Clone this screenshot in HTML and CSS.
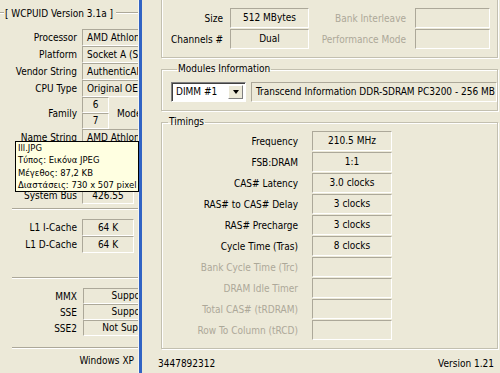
FILE: index.html
```html
<!DOCTYPE html>
<html>
<head>
    <title>WCPUID and memory timings</title>
    <meta charset="utf-8">
    <link rel="stylesheet" href="styles.css">
</head>
<body>
<div class="desktop">
    <!-- WCPUID window -->
    <div class="cpu-win">
        <div class="cpu-head">
            <span class="etch short"></span>
            <span class="cpu-title">[ WCPUID Version 3.1a ]</span>
            <span class="etch"></span>
        </div>
        <div class="cpu-rows">
            <div class="cpu-row"><span class="lbl">Processor</span><span class="val">AMD Athlon(tm) XP</span></div>
            <div class="cpu-row"><span class="lbl">Platform</span><span class="val">Socket A (Slot A)</span></div>
            <div class="cpu-row"><span class="lbl">Vendor String</span><span class="val">AuthenticAMD</span></div>
            <div class="cpu-row"><span class="lbl">CPU Type</span><span class="val">Original OEM</span></div>
            <div class="cpu-family">
                <span class="lbl fam-lbl">Family</span>
                <span class="val small">6</span>
                <span class="val small">7</span>
                <span class="mod-lbl">Model</span>
            </div>
            <div class="cpu-row"><span class="lbl">Name String</span><span class="val">AMD Athlon(tm) XP</span></div>
            <!-- rows under the tooltip -->
            <div class="cpu-row"><span class="lbl"></span><span class="val"></span></div>
            <div class="cpu-row"><span class="lbl"></span><span class="val"></span></div>
            <div class="cpu-row bus"><span class="lbl">System Bus</span><span class="val cache">426.55</span></div>
        </div>
        <div class="sep"></div>
        <div class="cpu-rows cache-block">
            <div class="cpu-row"><span class="lbl">L1 I-Cache</span><span class="val cache">64 K</span></div>
            <div class="cpu-row"><span class="lbl">L1 D-Cache</span><span class="val cache">64 K</span></div>
        </div>
        <div class="sep sep2"></div>
        <div class="cpu-rows flag-block">
            <div class="cpu-row flag"><span class="lbl">MMX</span><span class="val wide">Supported</span></div>
            <div class="cpu-row flag"><span class="lbl">SSE</span><span class="val wide">Supported</span></div>
            <div class="cpu-row flag"><span class="lbl">SSE2</span><span class="val wide">Not Supported</span></div>
        </div>
        <div class="sep sep3"></div>
        <div class="cpu-os">Windows XP</div>
    </div>

    <!-- memory window -->
    <div class="mem-win">
        <fieldset class="group general">
            <legend>General</legend>
            <div class="gen-grid">
                <span class="lbl">Size</span><span class="val c">512 MBytes</span>
                <span class="lbl off">Bank Interleave</span><span class="val"></span>
                <span class="lbl">Channels #</span><span class="val c">Dual</span>
                <span class="lbl off">Performance Mode</span><span class="val"></span>
            </div>
        </fieldset>

        <fieldset class="group modules">
            <legend>Modules Information</legend>
            <div class="mod-line">
                <div class="combo"><span class="combo-text">DIMM #1</span><span class="combo-btn"><span class="arrow"></span></span></div>
                <div class="val mod-name">Transcend Information DDR-SDRAM PC3200 - 256 MB</div>
            </div>
        </fieldset>

        <fieldset class="group timings">
            <legend>Timings</legend>
            <div class="tim-grid">
                <span class="lbl">Frequency</span><span class="val c">210.5 MHz</span>
                <span class="lbl">FSB:DRAM</span><span class="val c">1:1</span>
                <span class="lbl">CAS# Latency</span><span class="val c">3.0 clocks</span>
                <span class="lbl">RAS# to CAS# Delay</span><span class="val c">3 clocks</span>
                <span class="lbl">RAS# Precharge</span><span class="val c">3 clocks</span>
                <span class="lbl">Cycle Time (Tras)</span><span class="val c">8 clocks</span>
                <span class="lbl off">Bank Cycle Time (Trc)</span><span class="val"></span>
                <span class="lbl off">DRAM Idle Timer</span><span class="val"></span>
                <span class="lbl off">Total CAS# (tRDRAM)</span><span class="val"></span>
                <span class="lbl off">Row To Column (tRCD)</span><span class="val"></span>
            </div>
        </fieldset>

        <div class="status">
            <span>3447892312</span>
            <span>Version 1.21</span>
        </div>
    </div>

    <!-- explorer tooltip over the desktop -->
    <div class="tooltip">
        <div>Ill.JPG</div>
        <div>Τύπος: Εικόνα JPEG</div>
        <div>Μέγεθος: 87,2 KB</div>
        <div>Διαστάσεις: 730 x 507 pixel</div>
    </div>
</div>
</body>
</html>
```

FILE: styles.css
```css
/* Page */
body {
    margin: 0;
    font-family: "DejaVu Sans Condensed", "DejaVu Sans", "Liberation Sans", sans-serif;
    font-size: 10px;
    color: #000;
    background-color: #ECE9D8;
}

.desktop {
    position: relative;
    display: flex;
    width: 500px;
    height: 373px;
    overflow: hidden;
}

/* Shared value box (sunken static) */
.val {
    box-sizing: border-box;
    display: block;
    height: 100%;
    border-top: 1px solid #ACA899;
    border-left: 1px solid #ACA899;
    border-bottom: 1px solid #fff;
    border-right: 1px solid #fff;
    padding-left: 4px;
    white-space: nowrap;
    overflow: hidden;
}

.val.c {
    padding-left: 0;
    text-align: center;
}

.lbl {
    text-align: right;
    white-space: nowrap;
}

.lbl.off {
    color: #ACA899;
}

/* Left window */
.cpu-win {
    flex: none;
    width: 138px;
    border-right: 1px solid #F6F5EF;
    overflow: hidden;
}

.cpu-head {
    display: flex;
    align-items: center;
    height: 26px;
}

.etch {
    flex: 1;
    height: 0;
    border-top: 1px solid #ACA899;
    border-bottom: 1px solid #fff;
}

.etch.short {
    flex: none;
    width: 4px;
}

.cpu-title {
    padding: 0 3px 0 1px;
    white-space: nowrap;
}

.cpu-rows {
    margin-top: 3px;
}

.cpu-row {
    display: grid;
    grid-template-columns: 77px 90px;
    column-gap: 5px;
    height: 17px;
    align-items: center;
}

.cpu-row .val {
    line-height: 15px;
}

.cpu-family {
    display: grid;
    grid-template-columns: 77px 27px auto;
    grid-template-rows: 16px 16px;
    column-gap: 5px;
    align-items: center;
}

.cpu-family .val {
    grid-column: 2;
    padding-left: 0;
    text-align: center;
    line-height: 14px;
}

.fam-lbl {
    grid-row: 1 / 3;
}

.mod-lbl {
    grid-column: 3;
    grid-row: 1 / 3;
    padding-left: 3px;
}

.cpu-row.bus {
    margin-top: 7px;
}

.val.cache {
    width: 52px;
    padding-left: 0;
    text-align: center;
}

.sep {
    margin: 4px 0 0 12px;
    border-top: 1px solid #ACA899;
    border-bottom: 1px solid #fff;
}

.cache-block {
    margin-top: 9px;
}

.sep2 {
    margin-top: 24px;
}

.flag-block {
    margin-top: 9px;
}

.cpu-row.flag {
    height: 16px;
    grid-template-columns: 77px 104px;
    column-gap: 6px;
}

.val.wide {
    padding-left: 0;
    text-align: center;
    line-height: 14px;
}

.sep3 {
    margin-top: 11px;
}

.cpu-os {
    margin-top: 6px;
    padding-right: 4px;
    text-align: right;
    line-height: 12px;
}

/* Right window */
.mem-win {
    flex: 1;
    display: flex;
    flex-direction: column;
    border-left: 3px solid #3163C4;
    overflow: hidden;
}

.group {
    flex: none;
    margin: 5px 2px 0 19px;
    padding: 0;
    border: 1px solid #C3C0B0;
    box-shadow: inset 1px 1px 0 #fff, 1px 1px 0 #fff;
    min-width: 0;
}

.group legend {
    margin-left: 6px;
    padding: 0 1px;
    line-height: 12px;
}

.general {
    margin-top: -9px;
    padding: 5px 0 8px 0;
}

.gen-grid {
    display: grid;
    grid-template-columns: 61px 79px 92px 75px;
    grid-auto-rows: 20px;
    row-gap: 1px;
    column-gap: 7px;
    align-items: center;
}

.gen-grid .val {
    line-height: 18px;
}

.gen-grid .lbl.off {
    padding-right: 2px;
}

.modules {
    padding: 7px 0 8px 9px;
}

.mod-line {
    display: flex;
    gap: 5px;
    height: 20px;
}

.combo {
    box-sizing: border-box;
    flex: none;
    display: flex;
    width: 75px;
    height: 20px;
    background-color: #fff;
    border-top: 1px solid #808080;
    border-left: 1px solid #808080;
    border-bottom: 1px solid #fff;
    border-right: 1px solid #fff;
    box-shadow: inset 1px 1px 0 #404040;
}

.combo-text {
    flex: 1;
    padding-left: 4px;
    line-height: 18px;
}

.combo-btn {
    box-sizing: border-box;
    display: flex;
    align-items: center;
    justify-content: center;
    width: 15px;
    margin: 2px 2px 2px 0;
    background-color: #ECE9D8;
    border-top: 1px solid #fff;
    border-left: 1px solid #fff;
    border-bottom: 1px solid #808080;
    border-right: 1px solid #808080;
}

.arrow {
    width: 0;
    height: 0;
    border-left: 3px solid transparent;
    border-right: 3px solid transparent;
    border-top: 4px solid #000;
}

.mod-name {
    flex: 1;
    height: 20px;
    line-height: 18px;
}

.timings {
    padding: 3px 0 8px 0;
}

.tim-grid {
    display: grid;
    grid-template-columns: 136px 80px;
    grid-auto-rows: 20px;
    row-gap: 1px;
    column-gap: 14px;
    align-items: center;
}

.tim-grid .val {
    line-height: 18px;
}

.status {
    flex: none;
    display: flex;
    justify-content: space-between;
    padding: 9px 6px 0 16px;
    line-height: 12px;
}

/* Tooltip */
.tooltip {
    position: absolute;
    left: 15px;
    top: 141px;
    box-sizing: border-box;
    width: 124px;
    height: 51px;
    padding: 0 2px;
    background-color: #FFFFE1;
    border: 1px solid #000;
    font-size: 9.4px;
    line-height: 12.3px;
    white-space: nowrap;
    overflow: hidden;
}
```
